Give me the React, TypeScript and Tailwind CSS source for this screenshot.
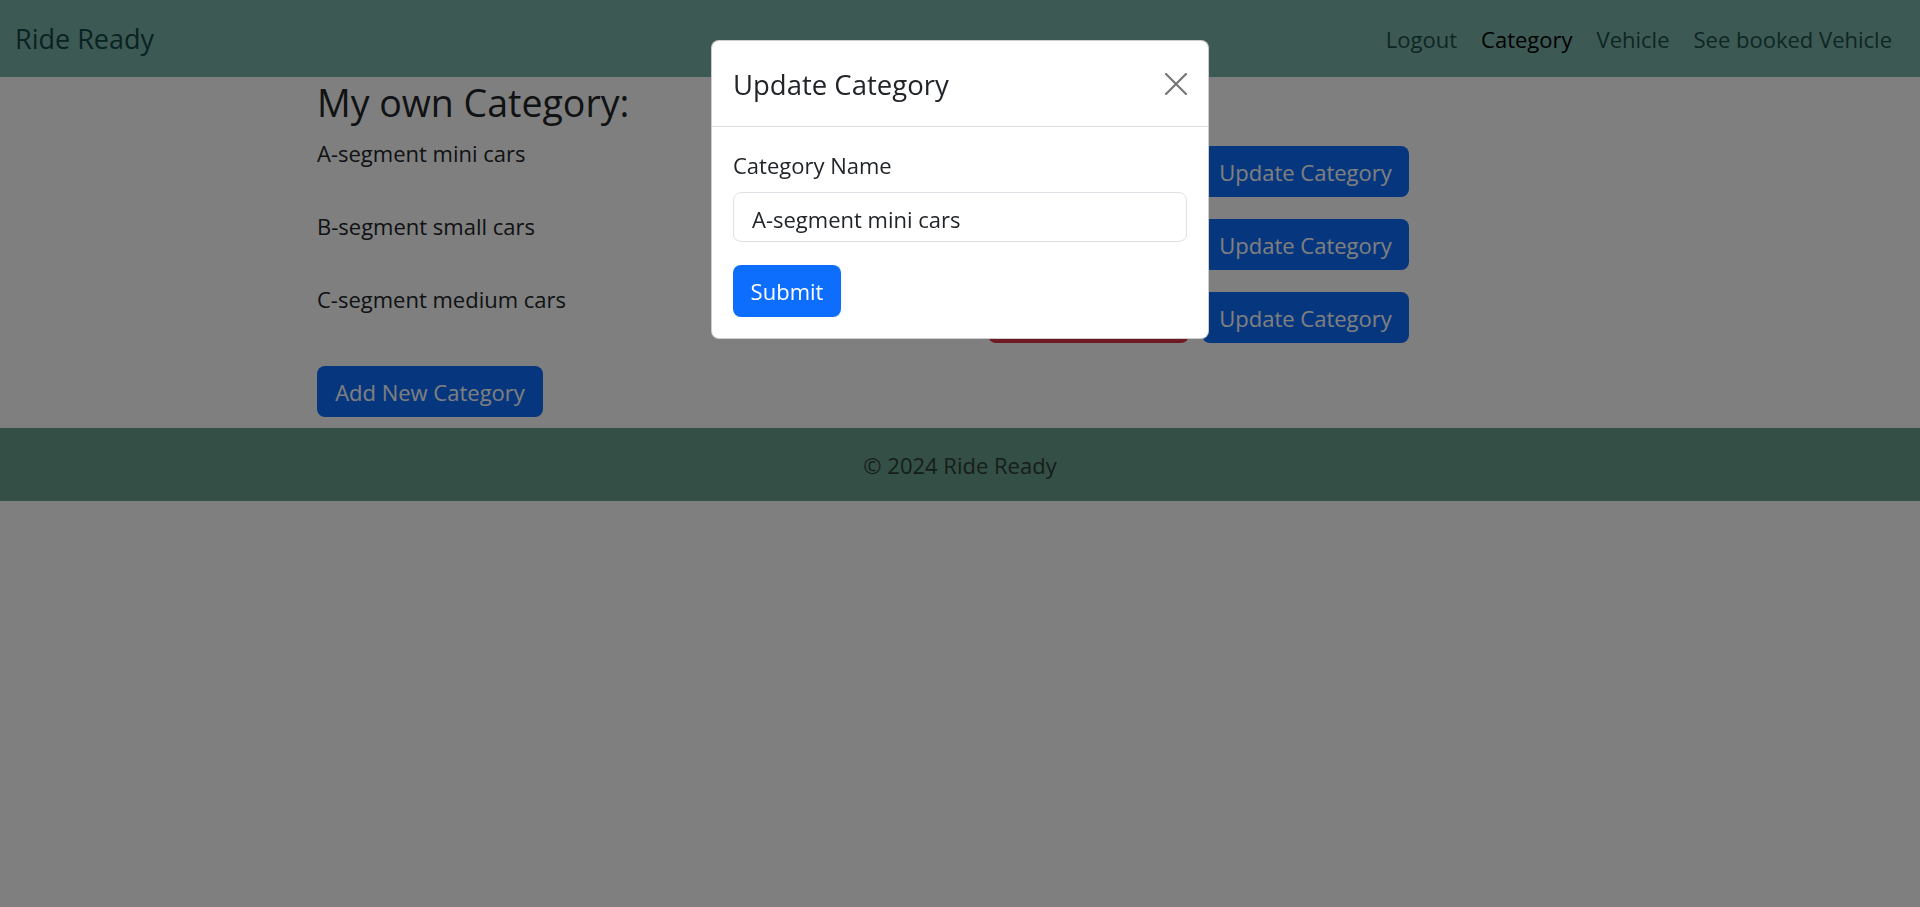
const categories = ['A-segment mini cars', 'B-segment small cars', 'C-segment medium cars'];

function Navbar() {
  return (
    <nav className="h-[77px] bg-[#7ab2a8] flex items-center justify-between pl-[15px] pr-[28px]">
      <a className="text-[27px] leading-[40px] text-[#124646]">Ride Ready</a>
      <ul className="flex items-center gap-[24px] text-[22px] leading-[30px]">
        <li className="text-[#1a4c47]">Logout</li>
        <li className="text-black">Category</li>
        <li className="text-[#1a4c47]">Vehicle</li>
        <li className="text-[#1a4c47]">See booked Vehicle</li>
      </ul>
    </nav>
  );
}

function CategoryRow({ name }: { name: string }) {
  return (
    <div className="flex items-start justify-between">
      <p className="text-[22px] leading-[30px] text-[#212529]">{name}</p>
      <div className="flex gap-[13px] mt-[8px]">
        <button className="w-[201px] h-[51px] rounded-lg bg-[#dc3545] text-white text-[22px] leading-[30px]">
          Delete Category
        </button>
        <button className="w-[207px] h-[51px] rounded-lg bg-[#0d6efd] text-white text-[22px] leading-[30px]">
          Update Category
        </button>
      </div>
    </div>
  );
}

function CloseIcon() {
  return (
    <svg width="22" height="22" viewBox="0 0 22 22" className="text-[#767676]">
      <path d="M1 1L21 21M21 1L1 21" stroke="currentColor" strokeWidth="2.2" strokeLinecap="square" />
    </svg>
  );
}

function UpdateModal() {
  return (
    <div className="fixed inset-0 bg-black/50">
      <div className="mx-auto mt-[40px] w-[498px] bg-white rounded-lg border border-black/20">
        <div className="h-[86px] flex items-center justify-between px-[21px] border-b border-[#dee2e6]">
          <h5 className="text-[27.5px] leading-[40px] text-[#212529] mt-[2px]">Update Category</h5>
          <CloseIcon />
        </div>
        <div className="px-[21px] pt-[23px] pb-[21px]">
          <label className="block text-[22px] leading-[30px] text-[#212529] mb-[12px]">Category Name</label>
          <div className="h-[50px] rounded-lg border border-[#dee2e6] flex items-center px-[18px] pt-[3px] text-[22px] leading-[30px] text-[#212529]">
            A-segment mini cars
          </div>
          <button className="mt-[23px] w-[108px] h-[52px] rounded-lg bg-[#0d6efd] text-white text-[22px] leading-[30px]">
            Submit
          </button>
        </div>
      </div>
    </div>
  );
}

export default function App() {
  return (
    <div className="min-h-screen bg-white font-['Open_Sans',sans-serif]">
      <Navbar />
      <main className="pl-[317px] pb-[11px]">
        <div className="w-[1092px]">
          <h2 className="mt-[3px] text-[37.5px] leading-[45px] text-[#212529]">My own Category:</h2>
          <div className="mt-[13px] flex flex-col gap-[14px]">
            {categories.map((c) => (
              <CategoryRow key={c} name={c} />
            ))}
          </div>
          <button className="mt-[23px] w-[226px] h-[51px] rounded-lg bg-[#0d6efd] text-white text-[22px] leading-[30px]">
            Add New Category
          </button>
        </div>
      </main>
      <footer className="h-[73px] bg-[#689e8a] flex items-center justify-center text-[22px] leading-[30px] text-[#2c3d37]">
        © 2024 Ride Ready
      </footer>
      <UpdateModal />
    </div>
  );
}
